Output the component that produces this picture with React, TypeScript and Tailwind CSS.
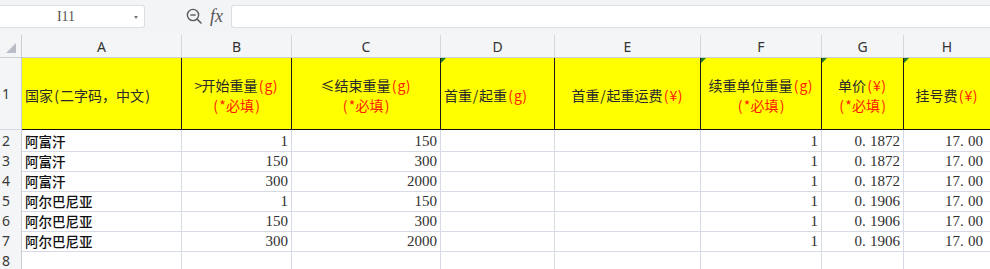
import React from "react";

const GRID =
  "grid grid-cols-[22px_160px_110px_149px_114px_146px_121px_82px_1fr]";

const CJK = "font-['Noto_Sans_CJK_SC',sans-serif]";
const NUM = "font-['Liberation_Serif','Noto_Sans_CJK_SC',serif]";

// render text with half-width (ASCII) characters on a fixed 7px advance, as in the reference
function T({ s }: { s: string }) {
  const parts: React.ReactNode[] = [];
  let buf = "";
  const flush = (k: number) => {
    if (buf) {
      parts.push(<React.Fragment key={"t" + k}>{buf}</React.Fragment>);
      buf = "";
    }
  };
  Array.from(s).forEach((ch, i) => {
    if (ch.charCodeAt(0) < 128 || ch === "¥") {
      flush(i);
      parts.push(
        <span key={i} className="inline-block w-[7px] text-center">
          {ch}
        </span>
      );
    } else {
      buf += ch;
    }
  });
  flush(s.length + 1);
  return <>{parts}</>;
}

function Red({ s }: { s: string }) {
  return (
    <span className="text-[#ff1a00]">
      <T s={s} />
    </span>
  );
}

function GreenMark() {
  return (
    <span className="absolute left-0 top-0 w-0 h-0 border-t-[5px] border-t-[#1f7a25] border-r-[5px] border-r-transparent" />
  );
}

function HeadCell({
  children,
  align = "center",
  mark = false,
  last = false,
}: {
  children: React.ReactNode;
  align?: "left" | "center";
  mark?: boolean;
  last?: boolean;
}) {
  return (
    <div
      className={`relative bg-[#ffff00] ${last ? "" : "border-r border-r-[#1a1a1a]"} border-b border-b-[#111] flex flex-col justify-center ${
        align === "left" ? "items-start pl-[3px]" : "items-center"
      } text-[14px] leading-[20px] text-[#2a2a2a] ${CJK} whitespace-nowrap overflow-hidden pt-[3px]`}
    >
      {mark && <GreenMark />}
      {children}
    </div>
  );
}

function RowNum({ n }: { n: number }) {
  return (
    <div className="bg-[#f4f5f7] border-r border-r-[#c9cdd6] border-b border-b-[#d6dae4] flex items-center pl-[2px] text-[14px] text-[#3a3a3a] font-['Noto_Sans',sans-serif]">
      {n}
    </div>
  );
}

function Cell({
  children,
  right = false,
  num = false,
  last = false,
}: {
  children?: React.ReactNode;
  right?: boolean;
  num?: boolean;
  last?: boolean;
}) {
  return (
    <div
      className={`${last ? "" : "border-r border-r-[#d6dae4]"} border-b border-b-[#d6dae4] flex items-center pt-[2px] whitespace-nowrap overflow-hidden ${
        right ? (last ? "justify-end pr-[7px]" : "justify-end pr-[3px]") : "justify-start pl-[3px]"
      } ${num ? `${NUM} text-[15px] text-[#2f2f2f]` : `${CJK} text-[13.5px] font-medium text-[#111]`}`}
    >
      {children}
    </div>
  );
}

function Dec({ a, b }: { a: string; b: string }) {
  return (
    <span>
      {a}
      <span className="inline-block w-[8px]">.</span>
      {b}
    </span>
  );
}

const data = [
  ["阿富汗", "1", "150", "0", "1872"],
  ["阿富汗", "150", "300", "0", "1872"],
  ["阿富汗", "300", "2000", "0", "1872"],
  ["阿尔巴尼亚", "1", "150", "0", "1906"],
  ["阿尔巴尼亚", "150", "300", "0", "1906"],
  ["阿尔巴尼亚", "300", "2000", "0", "1906"],
];

export default function App() {
  return (
    <div className="w-[990px] h-[269px] overflow-hidden bg-white">
      {/* toolbar */}
      <div className="h-[35px] bg-[#f3f4f6] flex items-start pt-[5px]">
        <div className="relative w-[145px] h-[23px] bg-white border border-[#dcdfe5] border-l-0 rounded-r-[3px] flex items-center justify-center">
          <span className="text-[14px] text-[#555] font-['Liberation_Serif',serif] pr-[12px]">I11</span>
          <span className="absolute right-[6px] top-[10px] w-0 h-0 border-l-[2.5px] border-l-transparent border-r-[2.5px] border-r-transparent border-t-[3px] border-t-[#777]" />
        </div>
        <div className="ml-[41px] mt-[3px] flex items-center">
          <svg width="17" height="17" viewBox="0 0 17 17" fill="none">
            <circle cx="7" cy="7" r="5.6" stroke="#5a5a5a" strokeWidth="1.4" />
            <line x1="4.3" y1="7" x2="9.7" y2="7" stroke="#5a5a5a" strokeWidth="1.4" />
            <line x1="11" y1="11" x2="15" y2="15" stroke="#5a5a5a" strokeWidth="1.6" strokeLinecap="round" />
          </svg>
          <span className="ml-[7px] text-[18px] leading-[17px] italic text-[#555] font-['Liberation_Serif',serif]">
            fx
          </span>
        </div>
        <div className="ml-[8px] flex-1 h-[23px] bg-white border border-[#dcdfe5] border-r-0 rounded-l-[3px]" />
      </div>

      {/* column header */}
      <div className={`${GRID} h-[23px] bg-[#f4f5f7] border-b border-b-[#c9cdd6]`}>
        <div className="relative border-r border-r-[#c9cdd6]">
          <span className="absolute right-[5px] bottom-[4px] w-0 h-0 border-b-[10px] border-b-[#b9bdc5] border-l-[10px] border-l-transparent" />
        </div>
        {["A", "B", "C", "D", "E", "F", "G", "H"].map((c, i) => (
          <div
            key={c}
            className={`${i < 7 ? "border-r border-r-[#d3d6dd]" : ""} flex items-center justify-center text-[14px] text-[#333] font-['Noto_Sans',sans-serif]`}
          >
            {c}
          </div>
        ))}
      </div>

      {/* row 1 */}
      <div className={`${GRID} h-[72px]`}>
        <RowNum n={1} />
        <HeadCell align="left">
          <span>
            <T s="国家(二字码，中文)" />
          </span>
        </HeadCell>
        <HeadCell>
          <span>
            <T s=">开始重量" />
            <Red s="(g)" />
          </span>
          <span>
            <Red s="(*必填)" />
          </span>
        </HeadCell>
        <HeadCell>
          <span>
            <T s="≤结束重量" />
            <Red s="(g)" />
          </span>
          <span>
            <Red s="(*必填)" />
          </span>
        </HeadCell>
        <HeadCell align="left" mark>
          <span>
            <T s="首重/起重" />
            <Red s="(g)" />
          </span>
        </HeadCell>
        <HeadCell>
          <span>
            <T s="首重/起重运费" />
            <Red s="(¥)" />
          </span>
        </HeadCell>
        <HeadCell mark>
          <span>
            <T s="续重单位重量" />
            <Red s="(g)" />
          </span>
          <span>
            <Red s="(*必填)" />
          </span>
        </HeadCell>
        <HeadCell mark>
          <span>
            <T s="单价" />
            <Red s="(¥)" />
          </span>
          <span>
            <Red s="(*必填)" />
          </span>
        </HeadCell>
        <HeadCell mark last>
          <span>
            <T s="挂号费" />
            <Red s="(¥)" />
          </span>
        </HeadCell>
      </div>

      {/* data rows */}
      {data.map((r, i) => (
        <div key={i} className={`${GRID} h-[20px]`}>
          <RowNum n={i + 2} />
          <Cell>{r[0]}</Cell>
          <Cell right num>
            {r[1]}
          </Cell>
          <Cell right num>
            {r[2]}
          </Cell>
          <Cell />
          <Cell />
          <Cell right num>
            1
          </Cell>
          <Cell right num>
            <Dec a={r[3]} b={r[4]} />
          </Cell>
          <Cell right num last>
            <Dec a="17" b="00" />
          </Cell>
        </div>
      ))}

      {/* row 8 */}
      <div className={`${GRID} h-[20px]`}>
        <RowNum n={8} />
        <Cell />
        <Cell />
        <Cell />
        <Cell />
        <Cell />
        <Cell />
        <Cell />
        <Cell last />
      </div>
    </div>
  );
}
